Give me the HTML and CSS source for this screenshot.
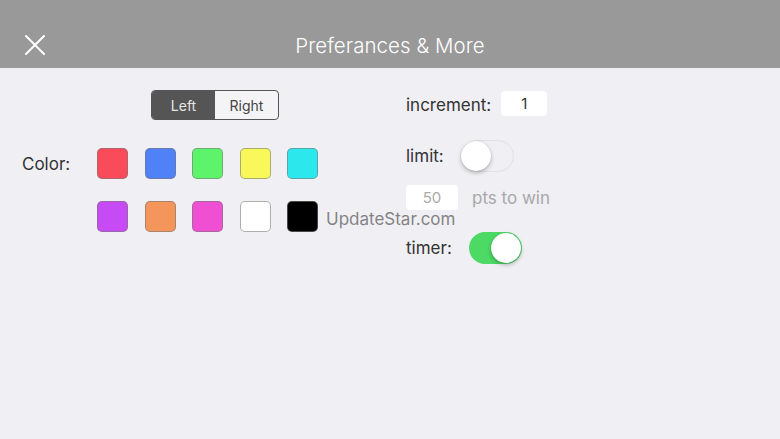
FILE: index.html
```html
<!DOCTYPE html>
<html>
<head>
<meta charset="utf-8">
<link rel="stylesheet" href="styles.css">
</head>
<body>
<header class="topbar">
  <button class="close" aria-label="Close">
    <svg width="20" height="20" viewBox="0 0 20 20"><path d="M1 1 L19 19 M19 1 L1 19" stroke="#fff" stroke-width="2" stroke-linecap="round" fill="none"/></svg>
  </button>
  <h1 class="title">Preferances &amp; More</h1>
</header>
<main class="content">
  <section class="left">
    <div class="segmented">
      <span class="seg active">Left</span>
      <span class="seg">Right</span>
    </div>
    <div class="colors">
      <span class="label color-label">Color:</span>
      <div class="swatches">
        <span class="sw red"></span>
        <span class="sw blue"></span>
        <span class="sw green"></span>
        <span class="sw yellow"></span>
        <span class="sw cyan"></span>
        <span class="sw purple"></span>
        <span class="sw orange"></span>
        <span class="sw pink"></span>
        <span class="sw white"></span>
        <span class="sw black"></span>
      </div>
    </div>
  </section>
  <section class="right">
    <div class="row r-inc">
      <span class="label">increment:</span>
      <span class="field inc">1</span>
    </div>
    <div class="row r-limit">
      <span class="label">limit:</span>
      <span class="toggle off"><span class="knob"></span></span>
    </div>
    <div class="row r-pts">
      <span class="field pts">50</span>
      <span class="muted">pts to win</span>
    </div>
    <div class="row r-timer">
      <span class="label">timer:</span>
      <span class="toggle on"><span class="knob"></span></span>
    </div>
  </section>
  <div class="watermark">UpdateStar.com</div>
</main>
</body>
</html>
```
FILE: styles.css
```css
* { box-sizing: border-box; }
html, body { margin: 0; padding: 0; }
body {
  width: 780px;
  height: 439px;
  background: #efeff4;
  font-family: Inter, Roboto, "Liberation Sans", sans-serif;
  overflow: hidden;
}
.topbar {
  height: 68px;
  background: #999999;
  position: relative;
  display: flex;
  align-items: flex-end;
  justify-content: center;
  padding-bottom: 10px;
}
.close {
  position: absolute;
  left: 25px;
  top: 35px;
  width: 20px;
  height: 20px;
  padding: 0;
  border: 0;
  background: none;
  display: flex;
}
.title {
  margin: 0;
  font-size: 20.4px;
  font-weight: 300;
  color: #fff;
  line-height: 24px;
  letter-spacing: 0.1px;
}
.content {
  position: relative;
  display: flex;
}
.left {
  width: 406px;
  padding-left: 22px;
  padding-top: 22px;
}
.segmented {
  margin-left: 129px;
  width: 128px;
  height: 30px;
  display: flex;
  border: 1px solid #555;
  border-radius: 4px;
  overflow: hidden;
  background: #f4f4f7;
}
.seg {
  flex: 1 1 0;
  display: flex;
  align-items: center;
  justify-content: center;
  font-size: 14px;
  color: #444;
}
.seg.active {
  background: #555;
  color: #e6e6e6;
  flex: 0 0 63px;
}
.colors {
  display: flex;
  margin-top: 28px;
}
.color-label {
  width: 75px;
  height: 31px;
  display: flex;
  align-items: center;
}
.label {
  font-size: 17px;
  color: #333;
}
.swatches {
  display: grid;
  grid-template-columns: repeat(5, 31px);
  grid-auto-rows: 31px;
  column-gap: 16.6px;
  row-gap: 22px;
}
.sw {
  border-radius: 5px;
  border: 1px solid rgba(120, 120, 120, 0.6);
}
.red { background: #fa4b5b; }
.blue { background: #5081f7; }
.green { background: #5df46c; }
.yellow { background: #f8f85b; }
.cyan { background: #2ce8ec; }
.purple { background: #c74bf5; }
.orange { background: #f4965b; }
.pink { background: #ef4fd2; }
.white { background: #ffffff; }
.black { background: #000000; }
.right {
  padding-top: 23px;
  display: flex;
  flex-direction: column;
}
.row {
  display: flex;
  align-items: center;
}
.r-inc { height: 25px; gap: 10px; }
.r-inc .label { margin-top: 2px; }
.r-limit { height: 32px; margin-top: 24px; gap: 17px; }
.r-pts { height: 25px; margin-top: 13px; gap: 14px; }
.r-timer { height: 32px; margin-top: 22px; gap: 17px; }
.field {
  background: #fff;
  border-radius: 4px;
  height: 25px;
  display: flex;
  align-items: center;
  justify-content: center;
  font-size: 15px;
}
.inc { width: 46px; color: #333; }
.pts { width: 52px; color: #aaa; }
.muted { font-size: 17px; color: #a8a8a8; }
.toggle {
  position: relative;
  width: 53px;
  height: 32px;
  border-radius: 16px;
  display: block;
}
.toggle.off {
  background: #efeff4;
  border: 1.5px solid #e0e0e5;
}
.toggle.on {
  background: #4cd964;
}
.knob {
  position: absolute;
  top: 1px;
  width: 30px;
  height: 30px;
  border-radius: 50%;
  background: #fff;
  box-shadow: 0 2px 4px rgba(0,0,0,0.25), 0 0 1px rgba(0,0,0,0.2);
}
.toggle.off .knob { left: -1px; top: -0.5px; }
.toggle.on .knob { right: 1px; }
.watermark {
  position: absolute;
  left: 326px;
  top: 141px;
  font-size: 17px;
  color: rgba(110, 110, 110, 0.85);
}
```
